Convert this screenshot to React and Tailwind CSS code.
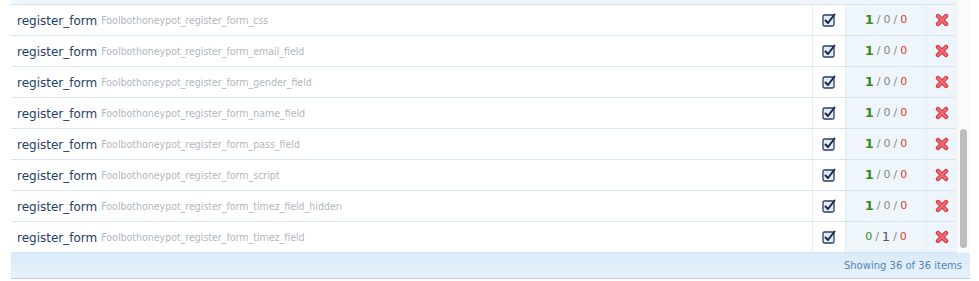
import React from 'react';

const rows = [
  { sub: 'css', c: [1, 0, 0] },
  { sub: 'email_field', c: [1, 0, 0] },
  { sub: 'gender_field', c: [1, 0, 0] },
  { sub: 'name_field', c: [1, 0, 0] },
  { sub: 'pass_field', c: [1, 0, 0] },
  { sub: 'script', c: [1, 0, 0] },
  { sub: 'timez_field_hidden', c: [1, 0, 0] },
  { sub: 'timez_field', c: [0, 1, 0] },
];

const CheckIcon = () => (
  <svg width="14" height="14" viewBox="0 0 14 14">
    <rect x="1" y="2" width="11" height="11" rx="1.5" fill="#e3ebf7" stroke="#2c3e66" strokeWidth="1.3" />
    <path d="M3.5 7.5 L6 10 L12.5 1.5" fill="none" stroke="#1b2a4a" strokeWidth="2" strokeLinecap="round" strokeLinejoin="round" />
  </svg>
);

const XIcon = () => (
  <svg width="14" height="14" viewBox="0 0 14 14">
    <path d="M3 3 L11 11 M11 3 L3 11" stroke="#c8303a" strokeWidth="4.4" strokeLinecap="round" />
    <path d="M3 3 L11 11 M11 3 L3 11" stroke="#f06670" strokeWidth="2.6" strokeLinecap="round" />
  </svg>
);

export default function App() {
  return (
    <div className="w-[979px] h-[281px] bg-white overflow-hidden" style={{ fontFamily: '"DejaVu Sans", sans-serif' }}>
      <div className="ml-[11px] w-[959px] flex flex-col">
        <div className="flex">
          <div className="flex-1 flex flex-col">
            <div className="h-[5px] bg-[#eef5fb] border-b border-[#d6e5f2]" />
            {rows.map((r, i) => (
              <div key={i} className="h-[31px] flex border-b border-[#d6e5f2]">
                <div className="flex-1 flex items-center pl-[6px] gap-[4px] pt-[1px]">
                  <span className="text-[12px] text-[#1f4068]">register_form</span>
                  <span className="text-[10.5px] text-[#b2b7be] font-stretch-condensed" style={{ fontFamily: '"DejaVu Sans Condensed", "DejaVu Sans", sans-serif' }}>Foolbothoneypot_register_form_{r.sub}</span>
                </div>
                <div className="w-[33px] border-l border-[#e3edf6] flex items-center justify-center">
                  <CheckIcon />
                </div>
                <div className="w-[81px] bg-[#eef6fc] border-l border-[#e3edf6] flex items-center justify-center text-[11px] text-[#888]">
                  <span className={r.c[0] ? 'text-[13px] font-bold text-[#3a8a1e]' : 'text-[#3a8a1e]'}>{r.c[0]}</span>
                  <span className="mx-[3px]">/</span>
                  <span className={r.c[1] ? 'text-[13px] text-[#555]' : ''}>{r.c[1]}</span>
                  <span className="mx-[3px]">/</span>
                  <span className="text-[#e03a2a]">{r.c[2]}</span>
                </div>
                <div className="w-[30px] bg-[#eef6fc] border-l border-[#e3edf6] flex items-center justify-center">
                  <XIcon />
                </div>
              </div>
            ))}
          </div>
          <div className="w-[14px] bg-[#fbfbfb] border-l border-[#eeeeee] flex flex-col">
            <div className="h-[129px]" />
            <div className="ml-[3px] w-[7px] h-[119px] rounded-full bg-[#bdbdbd]" />
          </div>
        </div>
        <div className="h-[26px] bg-gradient-to-b from-[#dbeaf8] to-[#e8f2fb] border-b border-[#b9d0e4] flex items-center justify-end pr-[8px]">
          <span className="text-[10px] text-[#4c86b8]">Showing 36 of 36 items</span>
        </div>
      </div>
    </div>
  );
}
